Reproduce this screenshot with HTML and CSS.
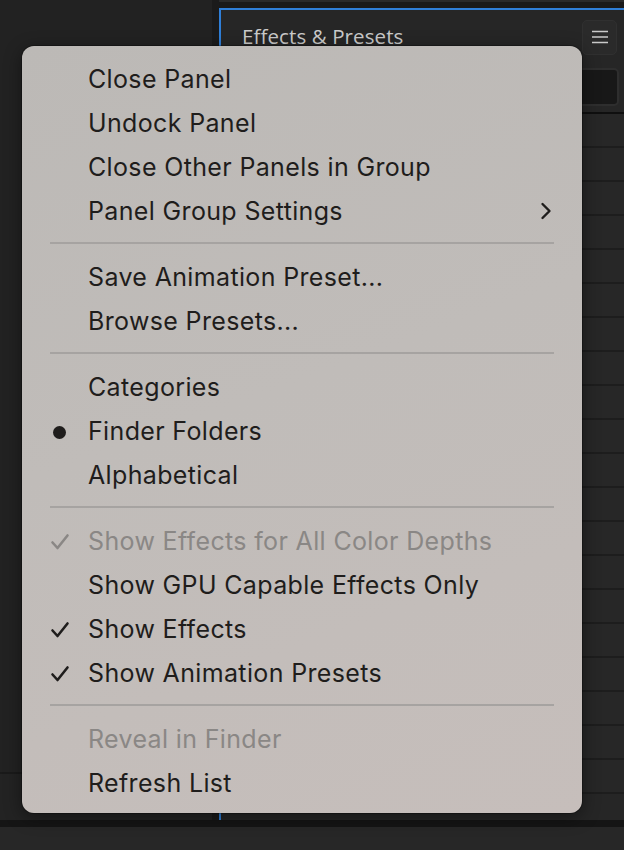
FILE: index.html
```html
<!DOCTYPE html>
<html>
<head>
<meta charset="utf-8">
<link rel="stylesheet" href="styles.css">
</head>
<body>
<div class="app">
  <div class="main">
    <div class="leftpane">
      <div class="left-top"></div>
      <div class="left-bottom"></div>
    </div>
    <div class="rightcol">
      <div class="topstrip"></div>
      <div class="panel">
        <div class="panel-head">
          <div class="panel-title">Effects &amp; Presets</div>
          <div class="menu-btn">
            <svg width="16" height="14" viewBox="0 0 16 14"><path d="M0 1.5H16M0 7H16M0 12.5H16" stroke="#c9c9c9" stroke-width="1.6"/></svg>
          </div>
        </div>
        <div class="search"></div>
        <div class="list">
          <div class="row"></div><div class="row"></div><div class="row"></div><div class="row"></div>
          <div class="row"></div><div class="row"></div><div class="row"></div><div class="row"></div>
          <div class="row"></div><div class="row"></div><div class="row"></div><div class="row"></div>
          <div class="row"></div><div class="row"></div><div class="row"></div><div class="row"></div>
          <div class="row"></div><div class="row"></div><div class="row"></div>
          <div class="row last">
            <span class="tw">
              <svg width="10" height="14" viewBox="0 0 10 14"><path d="M2 2L7 7L2 12" fill="none" stroke="#9a9a9a" stroke-width="1.6"/></svg>
            </span>
            <span class="folder"></span>
            <span class="row-label">Lights and Optical</span>
          </div>
        </div>
      </div>
    </div>
  </div>
  <div class="status">
    <div class="status-dark"></div>
    <div class="status-bar"></div>
  </div>
</div>

<div class="ctx">
  <div class="item"><span class="mark"></span><span class="label">Close Panel</span></div>
  <div class="item"><span class="mark"></span><span class="label">Undock Panel</span></div>
  <div class="item"><span class="mark"></span><span class="label">Close Other Panels in Group</span></div>
  <div class="item"><span class="mark"></span><span class="label">Panel Group Settings</span>
    <span class="sub"><svg width="12" height="18" viewBox="0 0 12 18"><path d="M2.5 2L9.5 9L2.5 16" fill="none" stroke="#1f1d1c" stroke-width="2.4" stroke-linecap="round" stroke-linejoin="round"/></svg></span>
  </div>
  <div class="sep"></div>
  <div class="item"><span class="mark"></span><span class="label">Save Animation Preset...</span></div>
  <div class="item"><span class="mark"></span><span class="label">Browse Presets...</span></div>
  <div class="sep"></div>
  <div class="item"><span class="mark"></span><span class="label">Categories</span></div>
  <div class="item"><span class="mark"><span class="dot"></span></span><span class="label">Finder Folders</span></div>
  <div class="item"><span class="mark"></span><span class="label">Alphabetical</span></div>
  <div class="sep"></div>
  <div class="item disabled"><span class="mark"><svg width="20" height="18" viewBox="0 0 20 18"><path d="M2.5 9.5L7.5 15L17.5 2.5" fill="none" stroke="#8a8785" stroke-width="2.6" stroke-linecap="round" stroke-linejoin="round"/></svg></span><span class="label">Show Effects for All Color Depths</span></div>
  <div class="item"><span class="mark"></span><span class="label">Show GPU Capable Effects Only</span></div>
  <div class="item"><span class="mark"><svg width="20" height="18" viewBox="0 0 20 18"><path d="M2.5 9.5L7.5 15L17.5 2.5" fill="none" stroke="#1f1d1c" stroke-width="2.6" stroke-linecap="round" stroke-linejoin="round"/></svg></span><span class="label">Show Effects</span></div>
  <div class="item"><span class="mark"><svg width="20" height="18" viewBox="0 0 20 18"><path d="M2.5 9.5L7.5 15L17.5 2.5" fill="none" stroke="#1f1d1c" stroke-width="2.6" stroke-linecap="round" stroke-linejoin="round"/></svg></span><span class="label">Show Animation Presets</span></div>
  <div class="sep"></div>
  <div class="item disabled"><span class="mark"></span><span class="label">Reveal in Finder</span></div>
  <div class="item"><span class="mark"></span><span class="label">Refresh List</span></div>
</div>
</body>
</html>
```

FILE: styles.css
```css
* { box-sizing: border-box; }
html, body {
  margin: 0;
  padding: 0;
  width: 624px;
  height: 850px;
  overflow: hidden;
  background: #232323;
  font-family: Inter, "Noto Sans", sans-serif;
}
.app {
  display: flex;
  flex-direction: column;
  width: 624px;
  height: 850px;
}
.main {
  display: flex;
  height: 820px;
  flex: none;
}
.leftpane {
  width: 219px;
  flex: none;
  display: flex;
  flex-direction: column;
  background: #232323;
  border-right: 7px solid #1b1b1b;
}
.left-top {
  height: 774px;
  flex: none;
  background: #222222;
  border-bottom: 2px solid #1a1a1a;
}
.left-bottom {
  flex: 1;
  background: #232323;
}
.rightcol {
  flex: 1;
  display: flex;
  flex-direction: column;
  min-height: 0;
}
.topstrip {
  height: 8px;
  flex: none;
  background: #1a1a1a;
  border-top: 2px solid #2a2a2a;
}
.panel {
  flex: 1;
  min-height: 0;
  overflow: hidden;
  display: flex;
  flex-direction: column;
  background: #262626;
  border-top: 2px solid #2f7fd8;
  border-left: 2px solid #2f7fd8;
}
.panel-head {
  height: 58px;
  flex: none;
  display: flex;
  align-items: center;
  justify-content: space-between;
  padding: 0 7px 4px 21px;
}
.panel-title {
  font-family: "Open Sans", "Noto Sans", sans-serif;
  font-size: 20.5px;
  color: #cbcbcb;
  letter-spacing: 0.1px;
  margin-top: -2px;
}
.menu-btn {
  width: 35px;
  height: 35px;
  border-radius: 5px;
  background: #2a2a2a;
  border: 1px solid #303030;
  display: flex;
  align-items: center;
  justify-content: center;
}
.search {
  height: 38px;
  flex: none;
  margin: 0 5px 0 8px;
  background: #181818;
  border: 2px solid #2e2e2e;
  border-radius: 5px;
}
.list {
  margin-top: 6px;
  flex: none;
  border-top: 2px solid #0f0f0f;
  display: flex;
  flex-direction: column;
}
.row {
  height: 34px;
  flex: none;
  background: #272727;
  border-bottom: 2px solid #1d1d1d;
}
.row.last {
  display: flex;
  align-items: center;
  padding-left: 76px;
  gap: 10px;
}
.tw { display: flex; }
.folder {
  width: 27px;
  height: 18px;
  background: #a9a9a9;
  margin-left: 4px;
}
.row-label {
  font-family: "Open Sans", "Noto Sans", sans-serif;
  font-size: 20px;
  color: #a5a5a5;
}
.status {
  height: 30px;
  flex: none;
  display: flex;
  flex-direction: column;
}
.status-dark { height: 7px; background: #151515; }
.status-bar { flex: 1; background: #272727; }

/* popup context menu */
.ctx {
  position: absolute;
  left: 22px;
  top: 46px;
  width: 560px;
  height: 767px;
  border-radius: 12px;
  background: linear-gradient(160deg, #bcb9b6 0%, #c0bcb9 45%, #c6bebb 100%);
  box-shadow: 0 4px 18px rgba(0,0,0,0.45), 0 0 0 1px rgba(0,0,0,0.25);
  padding: 11px 28px 8px 28px;
  display: flex;
  flex-direction: column;
}
.item {
  height: 44px;
  flex: none;
  display: flex;
  align-items: center;
  color: #1f1d1c;
  font-size: 25px;
  letter-spacing: 0.35px;
}
.item.disabled { color: #8a8785; }
.mark {
  width: 38px;
  flex: none;
  display: flex;
  align-items: center;
  justify-content: flex-start;
  margin-top: 2px;
}
.dot {
  width: 13px;
  height: 13px;
  border-radius: 50%;
  background: #1f1d1c;
  margin-left: 3px;
}
.label { flex: 1; white-space: nowrap; }
.sub {
  display: flex;
  margin-right: 2px;
}
.sep {
  height: 22px;
  flex: none;
  display: flex;
  align-items: center;
}
.sep::before {
  content: "";
  display: block;
  width: 100%;
  height: 2px;
  background: #a6a3a1;
  margin-top: -2px;
}
```
